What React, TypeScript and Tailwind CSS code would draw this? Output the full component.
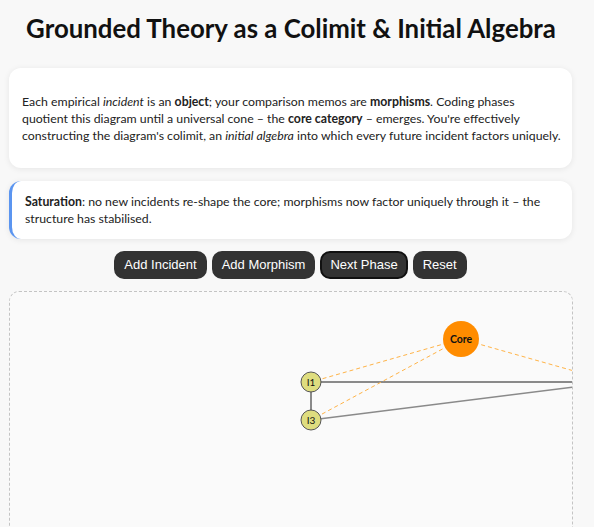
import React from 'react';

type Node = { id: string; x: number; y: number; r: number; core?: boolean };

const nodes: Node[] = [
  { id: 'I1', x: 301, y: 90, r: 10 },
  { id: 'I3', x: 301, y: 128, r: 10 },
  { id: 'I2', x: 603, y: 90, r: 10 },
  { id: 'Core', x: 451, y: 47, r: 18, core: true },
];

const edges: [string, string, number][] = [
  ['I1', 'I2', 2],
  ['I3', 'I2', 1.5],
  ['I1', 'I3', 2],
];

const byId = (id: string) => nodes.find((n) => n.id === id)!;

const Diagram: React.FC = () => {
  const core = byId('Core');
  return (
    <svg width="800" height="400" className="block">
      {edges.map(([a, b, w]) => {
        const p = byId(a);
        const q = byId(b);
        return <line key={a + b} x1={p.x} y1={p.y} x2={q.x} y2={q.y} stroke="#8a8a8a" strokeWidth={w} />;
      })}
      {nodes
        .filter((n) => !n.core)
        .map((n) => (
          <line
            key={'c' + n.id}
            x1={core.x}
            y1={core.y}
            x2={n.x}
            y2={n.y}
            stroke="#ffb347"
            strokeWidth={1}
            strokeDasharray="4 3"
          />
        ))}
      {nodes.map((n) => (
        <g key={n.id}>
          <circle
            cx={n.x}
            cy={n.y}
            r={n.r}
            fill={n.core ? '#ff8c00' : '#dedd7f'}
            stroke={n.core ? 'none' : '#555'}
            strokeWidth={1}
          />
          <text
            x={n.x}
            y={n.y + 3.5}
            textAnchor="middle"
            fontSize={n.core ? 10.5 : 10}
            fontWeight={n.core ? 700 : 400}
            fill="#111"
            style={{ fontFamily: 'Lato, sans-serif' }}
          >
            {n.id}
          </text>
        </g>
      ))}
    </svg>
  );
};

const App: React.FC = () => {
  const buttons = ['Add Incident', 'Add Morphism', 'Next Phase', 'Reset'];

  return (
    <div className="min-h-screen bg-[#f8f8f8] text-[#222] font-['Lato',sans-serif] overflow-hidden">
      <div className="w-[564px] ml-[9px] pt-[12px]">
        <h1 className="text-center text-[25.8px] leading-[32px] font-bold text-[#111]">
          Grounded Theory as a Colimit &amp; Initial Algebra
        </h1>

        <div className="mt-[24px] w-[563px] bg-white rounded-[12px] shadow-[0_1px_6px_rgba(0,0,0,0.08)] pl-[13px] pr-[8px] pt-[25px] pb-[24px] text-[12.3px] leading-[17px]">
          <p>
            Each empirical <em>incident</em> is an <strong>object</strong>; your comparison memos are{' '}
            <strong>morphisms</strong>. Coding phases
            <br />
            quotient this diagram until a universal cone – the <strong>core category</strong> – emerges. You're
            effectively
            <br />
            constructing the diagram's colimit, an <em>initial algebra</em> into which every future incident factors
            uniquely.
          </p>
        </div>

        <div className="mt-[13px] w-[563px] bg-white rounded-[12px] border-l-[3px] border-[#5b95f0] shadow-[0_1px_6px_rgba(0,0,0,0.08)] pl-[13px] pr-[13px] py-[12px] text-[12.3px] leading-[17px]">
          <strong>Saturation</strong>: no new incidents re-shape the core; morphisms now factor uniquely through it – the
          structure has stabilised.
        </div>

        <div className="mt-[12px] w-[563px] flex justify-center gap-[5px]">
          {buttons.map((b) => (
            <button
              key={b}
              className={
                'h-[28px] px-[8px] rounded-[10px] bg-[#333] text-white text-[13px] font-["Liberation_Sans",Arial,sans-serif] border-2 ' +
                (b === 'Next Phase' ? 'border-[#111]' : 'border-[#333]')
              }
            >
              {b}
            </button>
          ))}
        </div>

        <div className="mt-[12px] w-[564px] h-[400px] bg-[#fafafa] border border-dashed border-[#c4c4c4] rounded-[10px] overflow-hidden">
          <Diagram />
        </div>
      </div>
    </div>
  );
};

export default App;
